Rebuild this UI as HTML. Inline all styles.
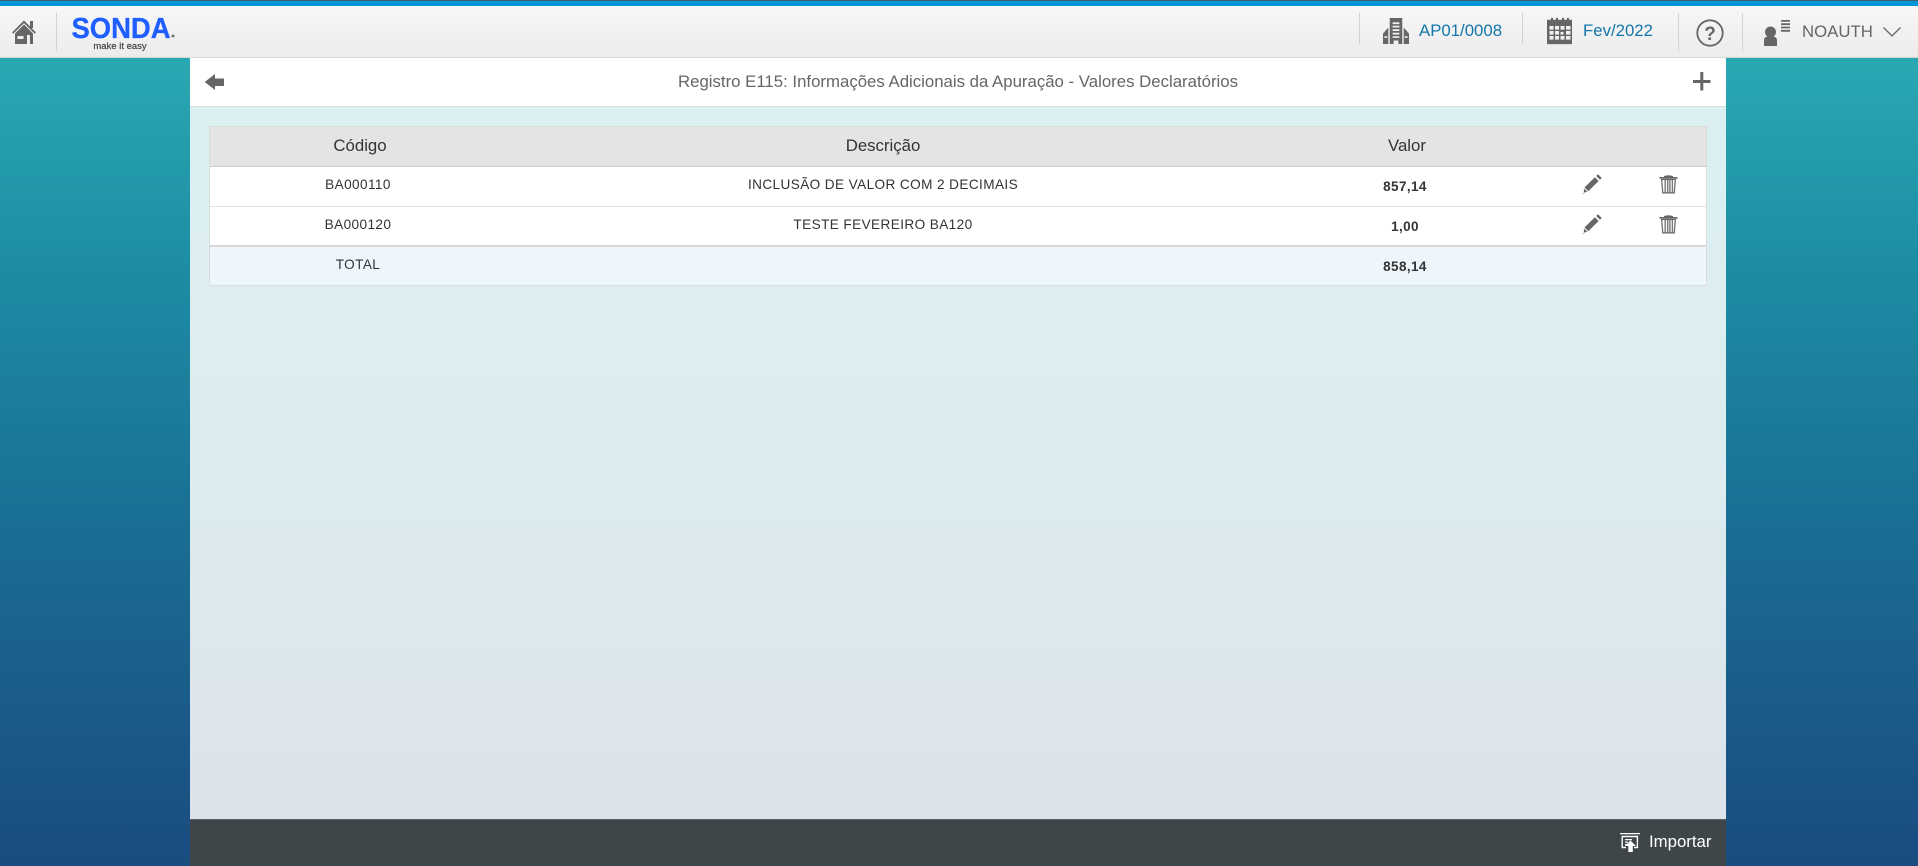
<!DOCTYPE html>
<html lang="pt">
<head>
<meta charset="utf-8">
<title>Registro E115</title>
<style>
html,body{margin:0;padding:0;width:1918px;height:866px;overflow:hidden}
body{position:relative;font-family:"Liberation Sans",sans-serif;background:linear-gradient(to bottom,#2eb0b6 0,#1d8ea4 30%,#1a6f94 60%,#1a4b80 100%)}
.abs{position:absolute}
.t{position:absolute;white-space:nowrap;line-height:1}
.c{transform:translateX(-50%)}
#top{left:0;top:0;width:1918px;height:58px;background:linear-gradient(to bottom,#f8f8f8,#ececec);border-bottom:1px solid #d6d6d6;box-sizing:border-box}
#stripe{left:0;top:0;width:1918px;height:6px;background:#0093d6;border-top:1px solid #33606f;box-sizing:border-box}
.sep{position:absolute;width:1px;background:#d2d2d2}
#panel{left:190px;top:58px;width:1536px;height:761px;background:linear-gradient(to bottom,#dcf0f3 0,#dcedf0 50%,#dce3ea 100%)}
#bar{left:190px;top:58px;width:1536px;height:48px;background:#fff;border-bottom:1px solid #dcdcdc}
#foot{left:190px;top:819px;width:1536px;height:47px;background:#3f4649;border-top:1px solid #5a6063;box-sizing:border-box}
#tb{left:209px;top:126px;width:1498px;height:160px;border:1px solid #dcdcdc;box-sizing:border-box;background:#fff}
#th{left:0;top:0;width:1496px;height:40px;background:#e4e4e4;border-bottom:1px solid #cfcfcf;box-sizing:border-box}
.l1{left:0;top:79px;width:1496px;height:1px;background:#e4e4e4}
#tot{left:0;top:118px;width:1496px;height:40px;background:#eef6fd;border-top:2px solid #d8d8d8;box-sizing:border-box}
.hd{font-size:16.8px;color:#333}
.cell{font-size:13.6px;color:#333;letter-spacing:.4px}
.b{font-weight:bold;font-size:13.5px;color:#333;letter-spacing:.4px}
.nav{font-size:16.8px;color:#1476ac}
svg{position:absolute;display:block}
</style>
</head>
<body>
<div class="abs" id="top"></div>
<div class="abs" id="stripe"></div>

<!-- home -->
<svg style="left:12px;top:20px" width="25" height="25" viewBox="0 0 25 25"><path fill="none" stroke="#666" stroke-width="1.800" d="M.700 13 12 1.800 23.300 13"/><path fill="#666" d="M18 1h3v7h-3z"/><path fill="#666" fill-rule="evenodd" d="M12 4.500 3 13.500V24h18V13.500zM5.500 16h6v3h-6zM15 15h3v9h-3z"/></svg>
<div class="sep" style="left:56px;top:13px;height:38px"></div>

<!-- logo -->
<svg style="left:70px;top:14px" width="110" height="38" viewBox="0 0 110 38"><text x="1.500" y="24" font-family="Liberation Sans" font-weight="bold" font-size="29" fill="#1f5eff" stroke="#1f5eff" stroke-width=".3" textLength="99" lengthAdjust="spacingAndGlyphs">SONDA</text><circle cx="103" cy="22" r="1.500" fill="#777"/></svg>
<div class="t c" style="left:120px;top:42px;font-size:9.500px;color:#444;-webkit-text-stroke:.2px #444">make it easy</div>

<div class="sep" style="left:1359px;top:13px;height:31px"></div>
<!-- building -->
<svg style="left:1383px;top:18px" width="26" height="26" viewBox="0 0 27 30" preserveAspectRatio="none"><path fill="#666" fill-rule="evenodd" d="M7 0h13v30h-4v-4h-5v4H7zM10 5v2h7V5zM10 9v2h7V9zM10 13v2h7v-2zM10 17v2h7v-2zM10 21v2h7v-2z"/><path fill="#666" fill-rule="evenodd" d="M5.500 11v19H0V18zM1.500 21v2h3v-2zM21.500 11 27 18v12h-5.500zM22.500 21v2h3v-2z"/></svg>
<div class="t nav" style="left:1419px;top:23px">AP01/0008</div>
<div class="sep" style="left:1522px;top:13px;height:31px"></div>
<!-- calendar -->
<svg style="left:1546px;top:17px" width="28" height="28" viewBox="0 0 28 31" preserveAspectRatio="none"><path fill="#666" fill-rule="evenodd" d="M1 3h4V1h2v2h3V1h2v2h4V1h2v2h3V1h2v2h3v27H1zM3.500 10v4h4v-4zM9 10v4h4v-4zM14.500 10v4h4v-4zM20 10v4h4.500v-4zM3.500 15.500v4h4v-4zM9 15.500v4h4v-4zM14.500 16.500v3h3v-3zM20 15.500v4h4.500v-4zM3.500 21v4h4v-4zM9 21v4h4v-4zM14.500 21v4h4v-4zM20 21v4h4.500v-4z"/></svg>
<div class="t nav" style="left:1583px;top:23px">Fev/2022</div>
<div class="sep" style="left:1678px;top:13px;height:38px"></div>
<!-- help -->
<svg style="left:1695px;top:18px" width="30" height="30" viewBox="0 0 30 30"><circle cx="15" cy="15" r="12.700" fill="none" stroke="#666" stroke-width="1.800"/><text x="15" y="22" text-anchor="middle" font-family="Liberation Sans" font-weight="bold" font-size="19" fill="#666">?</text></svg>
<div class="sep" style="left:1742px;top:13px;height:38px"></div>
<!-- user -->
<svg style="left:1763px;top:19px" width="28" height="28" viewBox="0 0 28 28"><circle cx="7.500" cy="13" r="5.500" fill="#666"/><path fill="#666" d="M1 27V21q0-3 4-3.500h5q4 .500 4 3.500v6z"/><path fill="#666" d="M18 1h9v1.800h-9zM18 4.300h9v1.800h-9zM18 7.600h9v1.800h-9zM18 10.900h9v1.800h-9z"/></svg>
<div class="t" style="left:1802px;top:24px;font-size:16.8px;color:#666">NOAUTH</div>
<svg style="left:1882px;top:26px" width="20" height="12" viewBox="0 0 20 12"><path fill="none" stroke="#666" stroke-width="1.300" d="M1.500 1.500 10 10l8.500-8.500"/></svg>

<div class="abs" id="panel"></div>
<div class="abs" id="bar"></div>
<svg style="left:204px;top:72px" width="21" height="20" viewBox="0 0 21 20"><path fill="#666" d="M.700 10 11 2v4.500h9v7.500h-9v4z"/></svg>
<div class="t c" style="left:958px;top:74px;font-size:16.8px;color:#666">Registro E115: Informações Adicionais da Apuração - Valores Declaratórios</div>
<svg style="left:1692px;top:72px" width="20" height="19" viewBox="0 0 20 19"><path fill="#666" d="M1 8h17.500v3H1z"/><path fill="#666" d="M8.300 0h3v18.500h-3z"/></svg>

<div class="abs" id="tb">
  <div class="abs" id="th"></div>
  <div class="abs l1"></div>
  <div class="abs" id="tot"></div>
</div>
<div class="t c hd" style="left:360px;top:138px">Código</div>
<div class="t c hd" style="left:883px;top:138px">Descrição</div>
<div class="t c hd" style="left:1407px;top:138px">Valor</div>

<div class="t c cell" style="left:358px;top:178px">BA000110</div>
<div class="t c cell" style="left:883px;top:178px">INCLUSÃO DE VALOR COM 2 DECIMAIS</div>
<div class="t c b" style="left:1405px;top:180px">857,14</div>
<div class="t c cell" style="left:358px;top:218px">BA000120</div>
<div class="t c cell" style="left:883px;top:218px">TESTE FEVEREIRO BA120</div>
<div class="t c b" style="left:1405px;top:220px">1,00</div>
<div class="t c cell" style="left:358px;top:258px">TOTAL</div>
<div class="t c b" style="left:1405px;top:260px">858,14</div>

<svg style="left:1581px;top:174px" width="21" height="21" viewBox="0 0 21 21"><path fill="#666" d="M3.500 13.500 13.800 3.200l3.800 3.800L7.300 17.300z"/><path fill="#666" d="M15.200 2 17 .3l3.700 3.700L19 5.800z"/><path fill="#666" d="M3 14.500l3.300 3.300-3.500 1z"/><path fill="#888" d="M2.300 19 1 20.500l2-1z"/></svg>
<svg style="left:1581px;top:214px" width="21" height="21" viewBox="0 0 21 21"><path fill="#666" d="M3.500 13.500 13.800 3.200l3.800 3.800L7.300 17.300z"/><path fill="#666" d="M15.200 2 17 .3l3.700 3.700L19 5.800z"/><path fill="#666" d="M3 14.500l3.300 3.300-3.500 1z"/><path fill="#888" d="M2.300 19 1 20.500l2-1z"/></svg>
<svg style="left:1659px;top:174px" width="19" height="20" viewBox="0 0 19 20"><path fill="#666" d="M.500 3h18v1.800H.500zM5 2Q9.500 .500 14 2V3H5z"/><path fill="#666" fill-rule="evenodd" d="M2 5h15l-1.200 14.500H3.200zM3.300 6l1 12.300h10.400l1-12.300z"/><path fill="#777" d="M5.500 6h1.400v12.500H5.500zM8 6h1.400v12.500H8zM10.200 6h1.400v12.500h-1.400zM12.700 6h1.400v12.500h-1.400z"/></svg>
<svg style="left:1659px;top:214px" width="19" height="20" viewBox="0 0 19 20"><path fill="#666" d="M.500 3h18v1.800H.500zM5 2Q9.500 .500 14 2V3H5z"/><path fill="#666" fill-rule="evenodd" d="M2 5h15l-1.200 14.500H3.200zM3.300 6l1 12.300h10.400l1-12.300z"/><path fill="#777" d="M5.500 6h1.400v12.500H5.500zM8 6h1.400v12.500H8zM10.200 6h1.400v12.500h-1.400zM12.700 6h1.400v12.500h-1.400z"/></svg>

<div class="abs" id="foot"></div>
<svg style="left:1620px;top:832px" width="20" height="20" viewBox="0 0 20 20"><path fill="#fff" d="M0 1h20v1.200H0z"/><path fill="none" stroke="#fff" stroke-width="1.400" d="M6 15.500H2.200V4.500h15.200v11H14"/><path fill="#fff" d="M5 7h7v1.200H5zM5 9.500h3v1.200H5zM5 12h2v1.200H5z"/><path fill="#fff" d="M10.500 8.500 16 14h-3.200v6h-4.500v-6H5z"/></svg>
<div class="t" style="left:1649px;top:834px;font-size:16.8px;color:#fff">Importar</div>
</body>
</html>
